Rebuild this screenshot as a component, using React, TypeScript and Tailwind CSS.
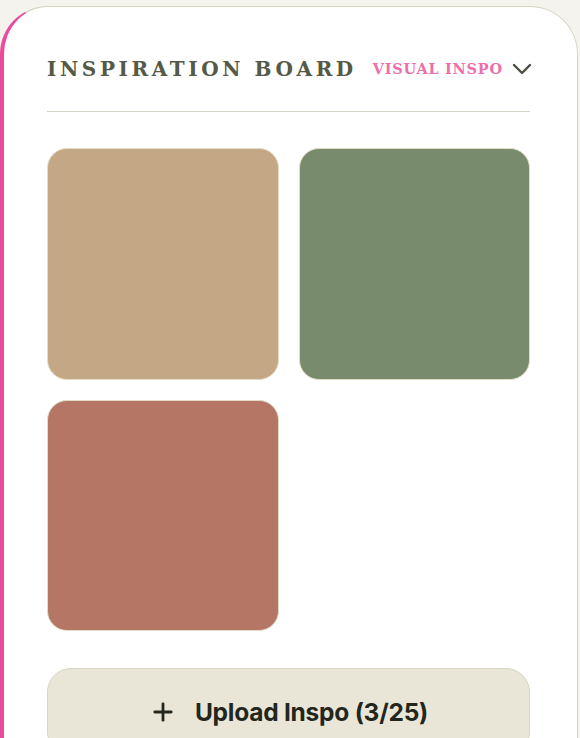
import { ChevronDown, Plus } from 'lucide-react'

const tiles = ['#c4a785', '#788b6c', '#b57665']

export default function App() {
  return (
    <div className="h-[738px] overflow-hidden bg-[#f4f3ee] pt-[6px]">
      <div className="w-[578px] rounded-[48px] border border-[#d8d5c3] border-l-4 border-l-[#ea4b9c] bg-white pl-[43px] pr-[47px] pt-[46px] pb-10">
        <div className="flex items-center gap-4 whitespace-nowrap">
          <h2
            className="text-[20px] font-black uppercase tracking-[0.18em] text-[#555947]"
            style={{ fontFamily: '"DejaVu Serif", serif' }}
          >
            Inspiration Board
          </h2>
          <button type="button" className="flex items-center gap-[3px]">
            <span
              className="text-[14.5px] font-bold uppercase tracking-[0.05em] text-[#ee6faa]"
              style={{ fontFamily: '"DejaVu Serif", serif' }}
            >
              Visual Inspo
            </span>
            <ChevronDown className="h-8 w-8 text-[#4a4d40]" strokeWidth={1.8} />
          </button>
        </div>

        <div className="mt-[26px] h-px bg-[#d6d4c4]" />

        <div className="mt-[36px] grid grid-cols-2 gap-5">
          {tiles.map((c) => (
            <div
              key={c}
              className="aspect-square rounded-[20px] border border-[#e2dcc6]"
              style={{ backgroundColor: c }}
            />
          ))}
        </div>

        <button
          type="button"
          className="mt-[37px] flex h-[88px] w-full items-center justify-center gap-[18px] rounded-[24px] border border-[#d9d6c4] bg-[#e9e6d8] text-[#23261c]"
          style={{ fontFamily: 'Inter, "Liberation Sans", sans-serif' }}
        >
          <Plus className="h-7 w-7" strokeWidth={2.4} />
          <span className="text-[24.5px] font-bold tracking-[-0.01em]">Upload Inspo (3/25)</span>
        </button>
      </div>
    </div>
  )
}
